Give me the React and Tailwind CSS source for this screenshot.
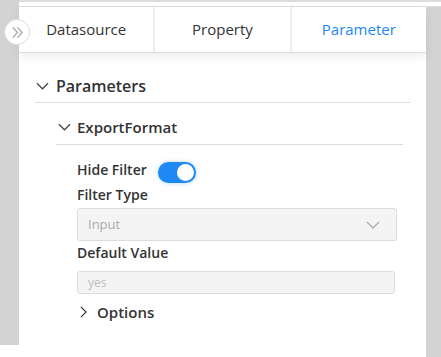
import React, { useState } from "react";

const font = { fontFamily: '"Open Sans", "Liberation Sans", sans-serif' };

const ChevronDown = ({ className }) => (
  <svg className={className} viewBox="0 0 14 8" fill="none" stroke="currentColor" strokeWidth="1.3">
    <path d="M1 1 L7 7 L13 1" />
  </svg>
);

const ChevronRight = ({ className }) => (
  <svg className={className} viewBox="0 0 8 14" fill="none" stroke="currentColor" strokeWidth="1.4">
    <path d="M1 1 L7 7 L1 13" />
  </svg>
);

const Tab = ({ label, active, last }) => (
  <div
    className={`flex flex-1 items-center justify-center text-[15px] ${
      active ? "text-[#1e88f5]" : "text-[#333]"
    } ${last ? "" : "border-r-2 border-[#eeeeee]"}`}
  >
    {label}
  </div>
);

export default function App() {
  const [hideFilter, setHideFilter] = useState(true);

  return (
    <div className="relative flex h-[357px] w-[441px] overflow-hidden bg-white" style={font}>
      {/* left rail */}
      <div className="h-[345px] w-[19px] shrink-0 bg-[#d3d3d3]" />

      <div className="flex flex-1 flex-col">
        <div className="h-[7px] shrink-0 border-t-2 border-b border-[#dddddd] bg-white" />
        <div className="flex flex-1">
          <div className="flex flex-1 flex-col bg-white">
            {/* tabs */}
            <div className="relative z-10 flex h-[46px] shrink-0 border-b border-[#dddddd] bg-white shadow-[0_4px_10px_rgba(0,0,0,0.07)]">
              <Tab label="Datasource" />
              <Tab label="Property" />
              <Tab label="Parameter" active last />
            </div>

            <div className="px-4 pt-4">
              <div className="flex h-[34px] items-center border-b border-[#dddddd] text-[16px] font-semibold text-[#333]">
                <ChevronDown className="ml-px mr-[7px] h-[8px] w-[13px] text-[#444]" />
                Parameters
              </div>

              <div className="ml-[21px] mr-[7px] mt-[7px]">
                <div className="flex h-[35px] items-center border-b border-[#dddddd] text-[15px] font-semibold text-[#333]">
                  <ChevronDown className="ml-[2px] mr-[6px] h-[8px] w-[13px] text-[#444]" />
                  ExportFormat
                </div>

                <div className="ml-[21px] mr-[6px] pt-[16px]">
                  <div className="flex h-[22px] items-center">
                    <span className="-mt-[6px] text-[14px] font-semibold text-[#333]">Hide Filter</span>
                    <button
                      onClick={() => setHideFilter(!hideFilter)}
                      className={`ml-[11px] flex h-[21px] w-[38px] items-center rounded-full px-[2px] shadow-[0_0_4px_rgba(30,136,245,0.35)] ${
                        hideFilter ? "justify-end bg-[#1e88f5]" : "justify-start bg-[#ccc]"
                      }`}
                    >
                      <span className="h-[17px] w-[17px] rounded-full bg-white" />
                    </button>
                  </div>

                  <div className="mt-[1px] text-[14px] font-semibold leading-[22px] text-[#333]">Filter Type</div>
                  <div className="mt-[2px] flex h-[33px] items-center justify-between rounded-[3px] border border-[#dddddd] bg-[#f4f4f4] pl-[10px] pr-[16px]">
                    <span className="text-[13px] text-[#aaaaaa]">Input</span>
                    <ChevronDown className="h-[8px] w-[14px] text-[#aaaaaa]" />
                  </div>

                  <div className="mt-[1px] text-[14px] font-semibold leading-[22px] text-[#333]">Default Value</div>
                  <div className="mr-[2px] mt-[7px] flex h-[23px] items-center rounded-[3px] border border-[#dddddd] bg-[#f4f4f4] pl-[10px]">
                    <span className="text-[12px] text-[#bbbbbb]">yes</span>
                  </div>

                  <div className="mt-[7px] flex h-[22px] items-center text-[15px] font-semibold text-[#333]">
                    <ChevronRight className="ml-[3px] mr-[10px] h-[12px] w-[7px] text-[#333]" />
                    Options
                  </div>
                </div>
              </div>
            </div>
          </div>
          {/* right rail */}
          <div className="w-[15px] shrink-0 bg-[#d3d3d3]" />
        </div>
      </div>

      {/* collapse button */}
      <div className="absolute left-[4px] top-[19px] z-20 flex h-[26px] w-[26px] items-center justify-center rounded-full border border-[#dddddd] bg-white">
        <svg viewBox="0 0 16 16" className="h-[15px] w-[15px]" fill="none" stroke="#a0a0a0" strokeWidth="1.2">
          <path d="M3 2.5 L8 8 L3 13.5" />
          <path d="M8 2.5 L13 8 L8 13.5" />
        </svg>
      </div>
    </div>
  );
}
